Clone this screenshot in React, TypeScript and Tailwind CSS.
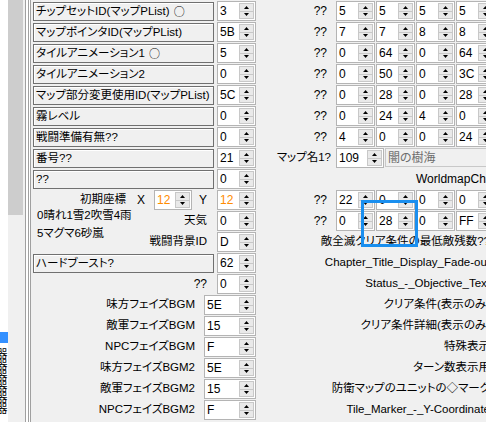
import React from 'react';

const Up = () => (
  <svg width="5" height="3" viewBox="0 0 5 3">
    <path d="M0 3L2.5 0L5 3Z" fill="#000" />
  </svg>
);
const Down = () => (
  <svg width="5" height="3" viewBox="0 0 5 3">
    <path d="M0 0L2.5 3L5 0Z" fill="#000" />
  </svg>
);

const Spin: React.FC<{ value: string; w?: string; orange?: boolean }> = ({ value, w = 'w-[39px]', orange }) => (
  <div className={`flex h-[20px] ${w} shrink-0 border border-[#b4b4b4] bg-white`}>
    <div className={`flex-1 pl-[2px] text-[12px] leading-[18px] ${orange ? 'text-[#ff8c00]' : 'text-black'}`}>{value}</div>
    <div className="my-[1px] mr-[1px] flex w-[15px] flex-col border border-[#c8c8c8] bg-[#e9e9e9]">
      <div className="flex flex-1 items-center justify-center border-b border-[#c8c8c8]">
        <Up />
      </div>
      <div className="flex flex-1 items-center justify-center">
        <Down />
      </div>
    </div>
  </div>
);

const Circle = () => <span className="ml-[4px] font-['Noto_Sans_CJK_JP',sans-serif] text-[11px]">○</span>;

const Box: React.FC<{ text: string; mark?: boolean }> = ({ text, mark }) => (
  <div className="mt-[1px] flex h-[19px] w-[181px] shrink-0 items-center border border-[#707070] pl-[2px] text-[11.5px] whitespace-nowrap shadow-[inset_1px_1px_0_#ffffff]">
    {text}
    {mark && <Circle />}
  </div>
);

const Row: React.FC<{ children: React.ReactNode }> = ({ children }) => (
  <div className="flex h-[21px] shrink-0">{children}</div>
);

const Quad: React.FC<{ label: string; vals: string[] }> = ({ label, vals }) => (
  <div className="flex flex-1 overflow-hidden">
    <div className="flex h-[20px] w-[74px] shrink-0 items-center justify-end pr-[3px] text-[12px]">{label}</div>
    <div className="ml-[6px] flex gap-[1px]">
      {vals.map((v, i) => (
        <Spin key={i} value={v} />
      ))}
    </div>
  </div>
);

const RLabel: React.FC<{ text: string }> = ({ text }) => (
  <div className="flex h-[20px] w-[234px] shrink-0 items-center justify-end text-[11.5px] whitespace-nowrap">{text}</div>
);

const quads = [
  ['5', '5', '5', '5'],
  ['7', '7', '8', '8'],
  ['0', '64', '0', '64'],
  ['0', '50', '0', '3C'],
  ['0', '28', '0', '28'],
  ['0', '24', '4', '0'],
  ['4', '0', '0', '24'],
];

const topRows: [string, string, boolean][] = [
  ['チップセットID(マップPList)', '3', true],
  ['マップポインタID(マップPList)', '5B', false],
  ['タイルアニメーション1', '5', true],
  ['タイルアニメーション2', '0', false],
  ['マップ部分変更使用ID(マップPList)', '5C', false],
  ['霧レベル', '0', false],
  ['戦闘準備有無??', '0', false],
];

const bgm: [string, string, string][] = [
  ['味方フェイズBGM', '5E', 'クリア条件(表示のみ)'],
  ['敵軍フェイズBGM', '15', 'クリア条件詳細(表示のみ)'],
  ['NPCフェイズBGM', 'F', '特殊表示'],
  ['味方フェイズBGM2', '5E', 'ターン数表示用'],
  ['敵軍フェイズBGM2', '15', '防衛マップのユニットの◇マーク'],
  ['NPCフェイズBGM2', 'F', 'Tile_Marker_-_Y-Coordinate'],
];

export default function App() {
  return (
    <div className="relative flex h-[422px] w-[486px] overflow-hidden bg-[#f0f0f0] font-['Liberation_Sans','Noto_Sans_CJK_JP',sans-serif] text-black [font-feature-settings:'palt']">
      {/* left list + scrollbar */}
      <div className="flex w-[8px] shrink-0 flex-col bg-white">
        <div className="h-[332px]" />
        <div className="h-[11px] bg-[#3390ff]" />
        <div className="h-[5px]" />
        <div className="-ml-[7px] overflow-hidden text-[11px] leading-[14px] [writing-mode:vertical-rl]">器器器器器器</div>
      </div>
      <div className="flex w-[15px] shrink-0 flex-col">
        <div className="h-[215px] bg-[#cdcdcd]" />
        <div className="flex-1 bg-[#f0f0f0]" />
      </div>
      <div className="w-[2px] shrink-0" />
      <div className="w-[1px] shrink-0 bg-[#a0a0a0]" />
      <div className="w-[2px] shrink-0 bg-white" />
      <div className="w-[1px] shrink-0 bg-[#a0a0a0]" />
      <div className="w-[1px] shrink-0 bg-white" />
      <div className="w-[1px] shrink-0 bg-[#a0a0a0]" />
      <div className="w-[2px] shrink-0" />

      {/* main form */}
      <div className="flex flex-1 flex-col pt-[1px]">
        {topRows.map(([t, v, m], i) => (
          <Row key={i}>
            <Box text={t} mark={m} />
            <div className="ml-[3px]">
              <Spin value={v} />
            </div>
            <Quad label="??" vals={quads[i]} />
          </Row>
        ))}

        <Row>
          <Box text="番号??" />
          <div className="ml-[3px]">
            <Spin value="21" />
          </div>
          <div className="flex flex-1 overflow-hidden">
            <div className="flex h-[20px] w-[75px] shrink-0 items-center justify-end text-[11.5px] whitespace-nowrap">マップ名1?</div>
            <div className="ml-[5px]">
              <Spin value="109" w="w-[48px]" />
            </div>
            <div className="ml-[1px] flex h-[19px] w-[120px] shrink-0 items-center border border-[#c8c8c8] pl-[2px] text-[12px] text-[#6d6d6d]">
              闇の樹海
            </div>
          </div>
        </Row>

        <Row>
          <Box text="??" />
          <div className="ml-[3px]">
            <Spin value="0" />
          </div>
          <div className="flex h-[20px] flex-1 items-center overflow-hidden pl-[160px] text-[12px] whitespace-nowrap">
            WorldmapChapterEvent
          </div>
        </Row>

        <Row>
          <div className="flex w-[181px] shrink-0 items-start">
            <div className="ml-[47px] flex h-[20px] items-center text-[11.5px]">初期座標</div>
            <div className="ml-[11px] flex h-[20px] items-center text-[12px]">X</div>
            <div className="ml-[9px]">
              <Spin value="12" orange w="w-[38px]" />
            </div>
            <div className="ml-[7px] flex h-[20px] items-center text-[12px]">Y</div>
          </div>
          <div className="ml-[3px]">
            <Spin value="12" orange />
          </div>
          <Quad label="??" vals={['22', '0', '0', '0']} />
        </Row>

        <div className="flex h-[42px] shrink-0">
          <div className="flex w-[184px] shrink-0">
            <div className="-mt-[5px] ml-[4px] flex flex-col text-[11.5px] leading-[18px]">
              <div>0晴れ1雪2吹雪4雨</div>
              <div>5マグマ6砂嵐</div>
            </div>
            <div className="flex flex-1 flex-col items-end pr-[10px] text-[11.5px]">
              <div className="flex h-[21px] items-center pb-[1px]">天気</div>
              <div className="flex h-[21px] items-center pb-[1px]">戦闘背景ID</div>
            </div>
          </div>
          <div className="flex flex-col">
            <div className="h-[21px]">
              <Spin value="0" />
            </div>
            <div className="h-[21px]">
              <Spin value="D" />
            </div>
          </div>
          <div className="flex flex-1 flex-col overflow-hidden">
            <Row>
              <Quad label="??" vals={['0', '28', '0', 'FF']} />
            </Row>
            <Row>
              <RLabel text="敵全滅クリア条件の最低敵残数??" />
            </Row>
          </div>
        </div>

        <Row>
          <Box text="ハードブースト?" />
          <div className="ml-[3px]">
            <Spin value="62" />
          </div>
          <RLabel text="Chapter_Title_Display_Fade-out" />
        </Row>

        <Row>
          <div className="flex h-[20px] w-[184px] shrink-0 items-center justify-end pr-[10px] text-[12px]">??</div>
          <Spin value="0" />
          <RLabel text="Status_-_Objective_Text" />
        </Row>

        {bgm.map(([l, v, r], i) => (
          <Row key={i}>
            <div className="flex h-[20px] w-[171px] shrink-0 items-center justify-end pr-[9px] text-[11.5px] whitespace-nowrap">{l}</div>
            <Spin value={v} w="w-[52px]" />
            <RLabel text={r} />
          </Row>
        ))}
      </div>

      {/* selection highlight */}
      <div className="pointer-events-none absolute top-[200px] left-[361px] h-[47px] w-[57px] border-[3px] border-[#1a8fef]" />
    </div>
  );
}
